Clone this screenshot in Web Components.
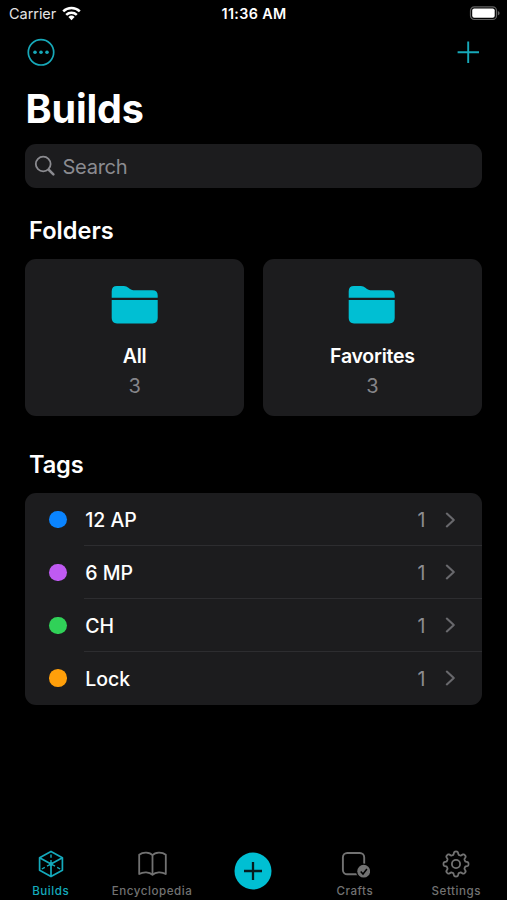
<!DOCTYPE html>
<html lang="en">
<head>
<meta charset="utf-8">
<title>Builds</title>
<style>
html,body{margin:0;height:100%;background:#000}
body{font-family:Inter,"Liberation Sans",sans-serif;color:#fff;overflow:hidden}
</style>
</head>
<body>
<app-screen></app-screen>
<script>
const define = (name, html) => {
  const t = document.createElement('template');
  t.innerHTML = html;
  customElements.define(name, class extends HTMLElement {
    constructor() {
      super();
      this.attachShadow({mode: 'open'}).append(t.content.cloneNode(true));
    }
  });
};

// Closed outline of a cog with eight rounded teeth.
const gearPath = (cx, cy, r, depth) => {
  let d = '';
  for (let i = 0; i < 160; i++) {
    const a = i / 160 * Math.PI * 2;
    const k = Math.tanh(2.1 * Math.cos(8 * a)) / Math.tanh(2.1);
    const rad = r + depth * k;
    d += (i ? 'L' : 'M') + (cx + rad * Math.sin(a)).toFixed(2) + ' ' + (cy - rad * Math.cos(a)).toFixed(2);
  }
  return d + 'Z';
};

define('status-bar', `
<style>
:host{display:grid;grid-template-columns:1fr auto 1fr;align-items:center;height:28px;padding:0 7px 0 9px;box-sizing:border-box;font-size:14.5px;line-height:28px}
.carrier{display:flex;align-items:center;gap:5.5px;color:#e4e4e4;letter-spacing:-.05px}
.time{font-weight:600;letter-spacing:.35px;font-size:14.3px;margin-left:-1px}
.battery{justify-self:end}
svg{display:block}
.carrier svg{margin-top:-2px}
</style>
<div class="carrier"><span>Carrier</span>
<svg width="19" height="15" viewBox="0 0 19 15" fill="none" stroke="#fff" stroke-width="2.5"><path d="M1.2 5.4a12 12 0 0 1 16.6 0M4.2 8.8a7.7 7.7 0 0 1 10.6 0"/><path d="M9.5 14.2 6.4 11a4.6 4.6 0 0 1 6.2 0Z" fill="#fff" stroke="none"/></svg></div>
<span class="time">11:36 AM</span>
<svg class="battery" width="31" height="16" viewBox="0 0 31 16"><rect x="1.5" y="0.9" width="26" height="12.6" rx="3.8" fill="none" stroke="#626262" stroke-width="1.2"/><rect x="3.2" y="2.6" width="22.5" height="9.2" rx="2" fill="#fff"/><path d="M28.9 5.1c2.2.8 2.2 3.4 0 4.2Z" fill="#626262"/></svg>
`);

define('nav-bar', `
<style>
:host{display:flex;justify-content:space-between;align-items:center;height:48px;padding:0 27px;color:#17a9b9}
svg{display:block;fill:none;stroke:currentColor}
</style>
<svg width="28" height="28" viewBox="0 0 28 28"><circle cx="14" cy="14.3" r="12.7" stroke-width="1.7"/><g fill="currentColor" stroke="none"><circle cx="8" cy="14.3" r="1.8"/><circle cx="14" cy="14.3" r="1.8"/><circle cx="20" cy="14.3" r="1.8"/></g></svg>
<svg width="24" height="24" viewBox="0 0 24 24" stroke-width="1.9"><path d="M12.2 1.5v21.4M1.6 12.2H23"/></svg>
`);

define('search-field', `
<style>
:host{display:flex;align-items:center;gap:6.5px;height:43.5px;border-radius:11px;background:#1c1c1e;color:#8b8b90;padding-left:9px;font-size:20.1px;box-sizing:border-box;letter-spacing:-.3px}
svg{display:block}
span{padding-top:1.5px}
</style>
<svg width="22" height="22" viewBox="0 0 22 22" fill="none" stroke="currentColor" stroke-linecap="round"><circle cx="9.2" cy="9" r="7.4" stroke-width="1.8"/><path d="m15 15 4.4 4.4" stroke-width="2.5"/></svg>
<span><slot></slot></span>
`);

define('section-title', `
<style>:host{display:block;font-size:23.6px;line-height:30px;font-weight:600;padding-left:4px;letter-spacing:var(--track,.02px)}</style>
<slot></slot>
`);

define('folder-card', `
<style>
:host{display:flex;flex-direction:column;align-items:center;box-sizing:border-box;height:156.5px;padding-top:26px;border-radius:11px;background:#1c1c1e;font-size:19.5px;line-height:30px}
svg{display:block;margin-bottom:17px}
.name{font-weight:600;letter-spacing:-.25px}
.count{color:#858589;font-size:20px}
</style>
<svg width="48" height="39" viewBox="0 0 48 39" fill="#00bfd3"><path d="M1 12.8V6.2Q1 1 6.2 1h7q2.6 0 4.5 1.7l1.6 1.4q1.4 1.1 3.2 1.1h19.2q5.3 0 5.3 5.3v2.3ZM1 15.1h46v18q0 5.3-5.3 5.3H6.3Q1 38.4 1 33.1Z" transform="translate(-.3 0)"/></svg>
<span class="name"><slot></slot></span><span class="count"><slot name="count"></slot></span>
`);

define('tag-row', `
<style>
:host{display:flex;height:52.9px;align-items:center;padding-left:24.3px;font-size:19.5px;box-sizing:border-box}
.dot{width:17.5px;height:17.5px;border-radius:50%;background:var(--tag);margin-right:17.7px}
.line{flex:1;display:flex;align-items:center;height:100%;box-sizing:border-box;border-bottom:1px solid var(--rule,#2d2d30);padding-right:26px}
.name{flex:1;font-weight:500;letter-spacing:-.02px;padding:2px 0 0 .8px}
.count{color:#8d8d92;margin-right:19.5px;padding-top:2px}
svg{display:block;margin-top:1px}
</style>
<i class="dot"></i><div class="line"><span class="name"><slot></slot></span><span class="count"><slot name="count"></slot></span>
<svg width="11" height="16" viewBox="0 0 11 16" fill="none" stroke="#68686c" stroke-width="2.1" stroke-linecap="round" stroke-linejoin="round"><path d="m1.8 1.6 7 6.4-7 6.4"/></svg></div>
`);

define('tab-item', `
<style>
:host{display:flex;flex-direction:column;align-items:center;color:var(--tab,#727272);font-size:11.6px;font-weight:500;line-height:16px;letter-spacing:.53px}
.icon{height:35px;display:flex;align-items:center}
span{margin-top:2px}
</style>
<div class="icon"><slot name="icon"></slot></div><span><slot></slot></span>
`);

define('tab-bar', `
<style>
:host{display:grid;grid-template-columns:repeat(5,1fr);height:54px}
svg{display:block;fill:none;stroke:currentColor}
.add{justify-self:center;margin-top:5.5px}
</style>
<tab-item style="--tab:#14aabc"><svg slot="icon" width="28" height="28" viewBox="0 0 28 28" stroke-width="1.7" stroke-linejoin="round"><path d="M14 1.4 25.4 7.7v12.6L14 26.6 2.6 20.3V7.7ZM2.6 7.7 14 14l11.4-6.3M14 14v12.6"/><path d="M14 4.5v3.2M14 10v4M4.8 19l3-1.6m2.2-1.2L14 14l4 2.2m2.2 1.2 3 1.6" stroke-width="1.4"/><circle cx="14" cy="14" r="2" fill="currentColor" stroke="none"/></svg>Builds</tab-item>
<tab-item><svg slot="icon" width="30" height="26" viewBox="0 0 30 26" stroke-width="1.8" stroke-linejoin="round"><path d="M15.5 4.3C12.7.9 6.1.6 2.2 3.7V23c4.1-2.5 10.2-2.3 13.3.8 3.1-3.1 9.2-3.3 13.3-.8V3.7C24.9.6 18.3.9 15.5 4.3Zm0 0v19.5"/></svg>Encyclopedia</tab-item>
<svg class="add" width="38" height="38" viewBox="0 0 38 38"><circle cx="19" cy="19" r="18.5" fill="#00bfd3" stroke="none"/><path d="M19 10v18M10 19h18" stroke="#061c20" stroke-width="2.3"/></svg>
<tab-item><svg slot="icon" width="30" height="28" viewBox="0 0 30 28"><rect x="2.9" y="3" width="21.3" height="21.3" rx="4.4" stroke-width="1.9"/><circle cx="23.7" cy="21.2" r="7.8" fill="#000" stroke="none"/><circle cx="23.7" cy="21.2" r="6.4" fill="currentColor" stroke="none"/><path d="m20.7 21.5 2.3 2.5 3.9-5" stroke="#000" stroke-width="1.5"/></svg>Crafts</tab-item>
<tab-item><svg slot="icon" width="28" height="28" viewBox="0 0 28 28" stroke-width="1.8" stroke-linejoin="round"><path d="${gearPath(14, 14, 11, 1.5)}"/><circle cx="14" cy="14" r="4.1"/></svg>Settings</tab-item>
`);

define('app-screen', `
<style>
:host{display:flex;flex-direction:column;height:900px;width:507px;background:#000}
main{flex:1;padding:0 25px}
h1{margin:5px 0 6.4px .5px;font-size:39.5px;line-height:57px;font-weight:700;letter-spacing:-.15px}
.folders{display:grid;grid-template-columns:1fr 1fr;gap:18.5px;margin:13px 0 34.5px}
section-title.first{margin-top:28.2px}
.tags{background:#1c1c1e;border-radius:11px;margin-top:13px;overflow:hidden}
</style>
<status-bar></status-bar><nav-bar></nav-bar>
<main>
<h1>Builds</h1>
<search-field>Search</search-field>
<section-title class="first">Folders</section-title>
<div class="folders"><folder-card>All<span slot="count">3</span></folder-card><folder-card>Favorites<span slot="count">3</span></folder-card></div>
<section-title style="--track:-.15px">Tags</section-title>
<div class="tags">
<tag-row style="--tag:#0a84ff">12 AP<span slot="count">1</span></tag-row>
<tag-row style="--tag:#bf5af2">6 MP<span slot="count">1</span></tag-row>
<tag-row style="--tag:#30d158">CH<span slot="count">1</span></tag-row>
<tag-row style="--tag:#ff9f0a;--rule:transparent">Lock<span slot="count">1</span></tag-row>
</div>
</main>
<tab-bar></tab-bar>
`);
</script>
</body>
</html>
